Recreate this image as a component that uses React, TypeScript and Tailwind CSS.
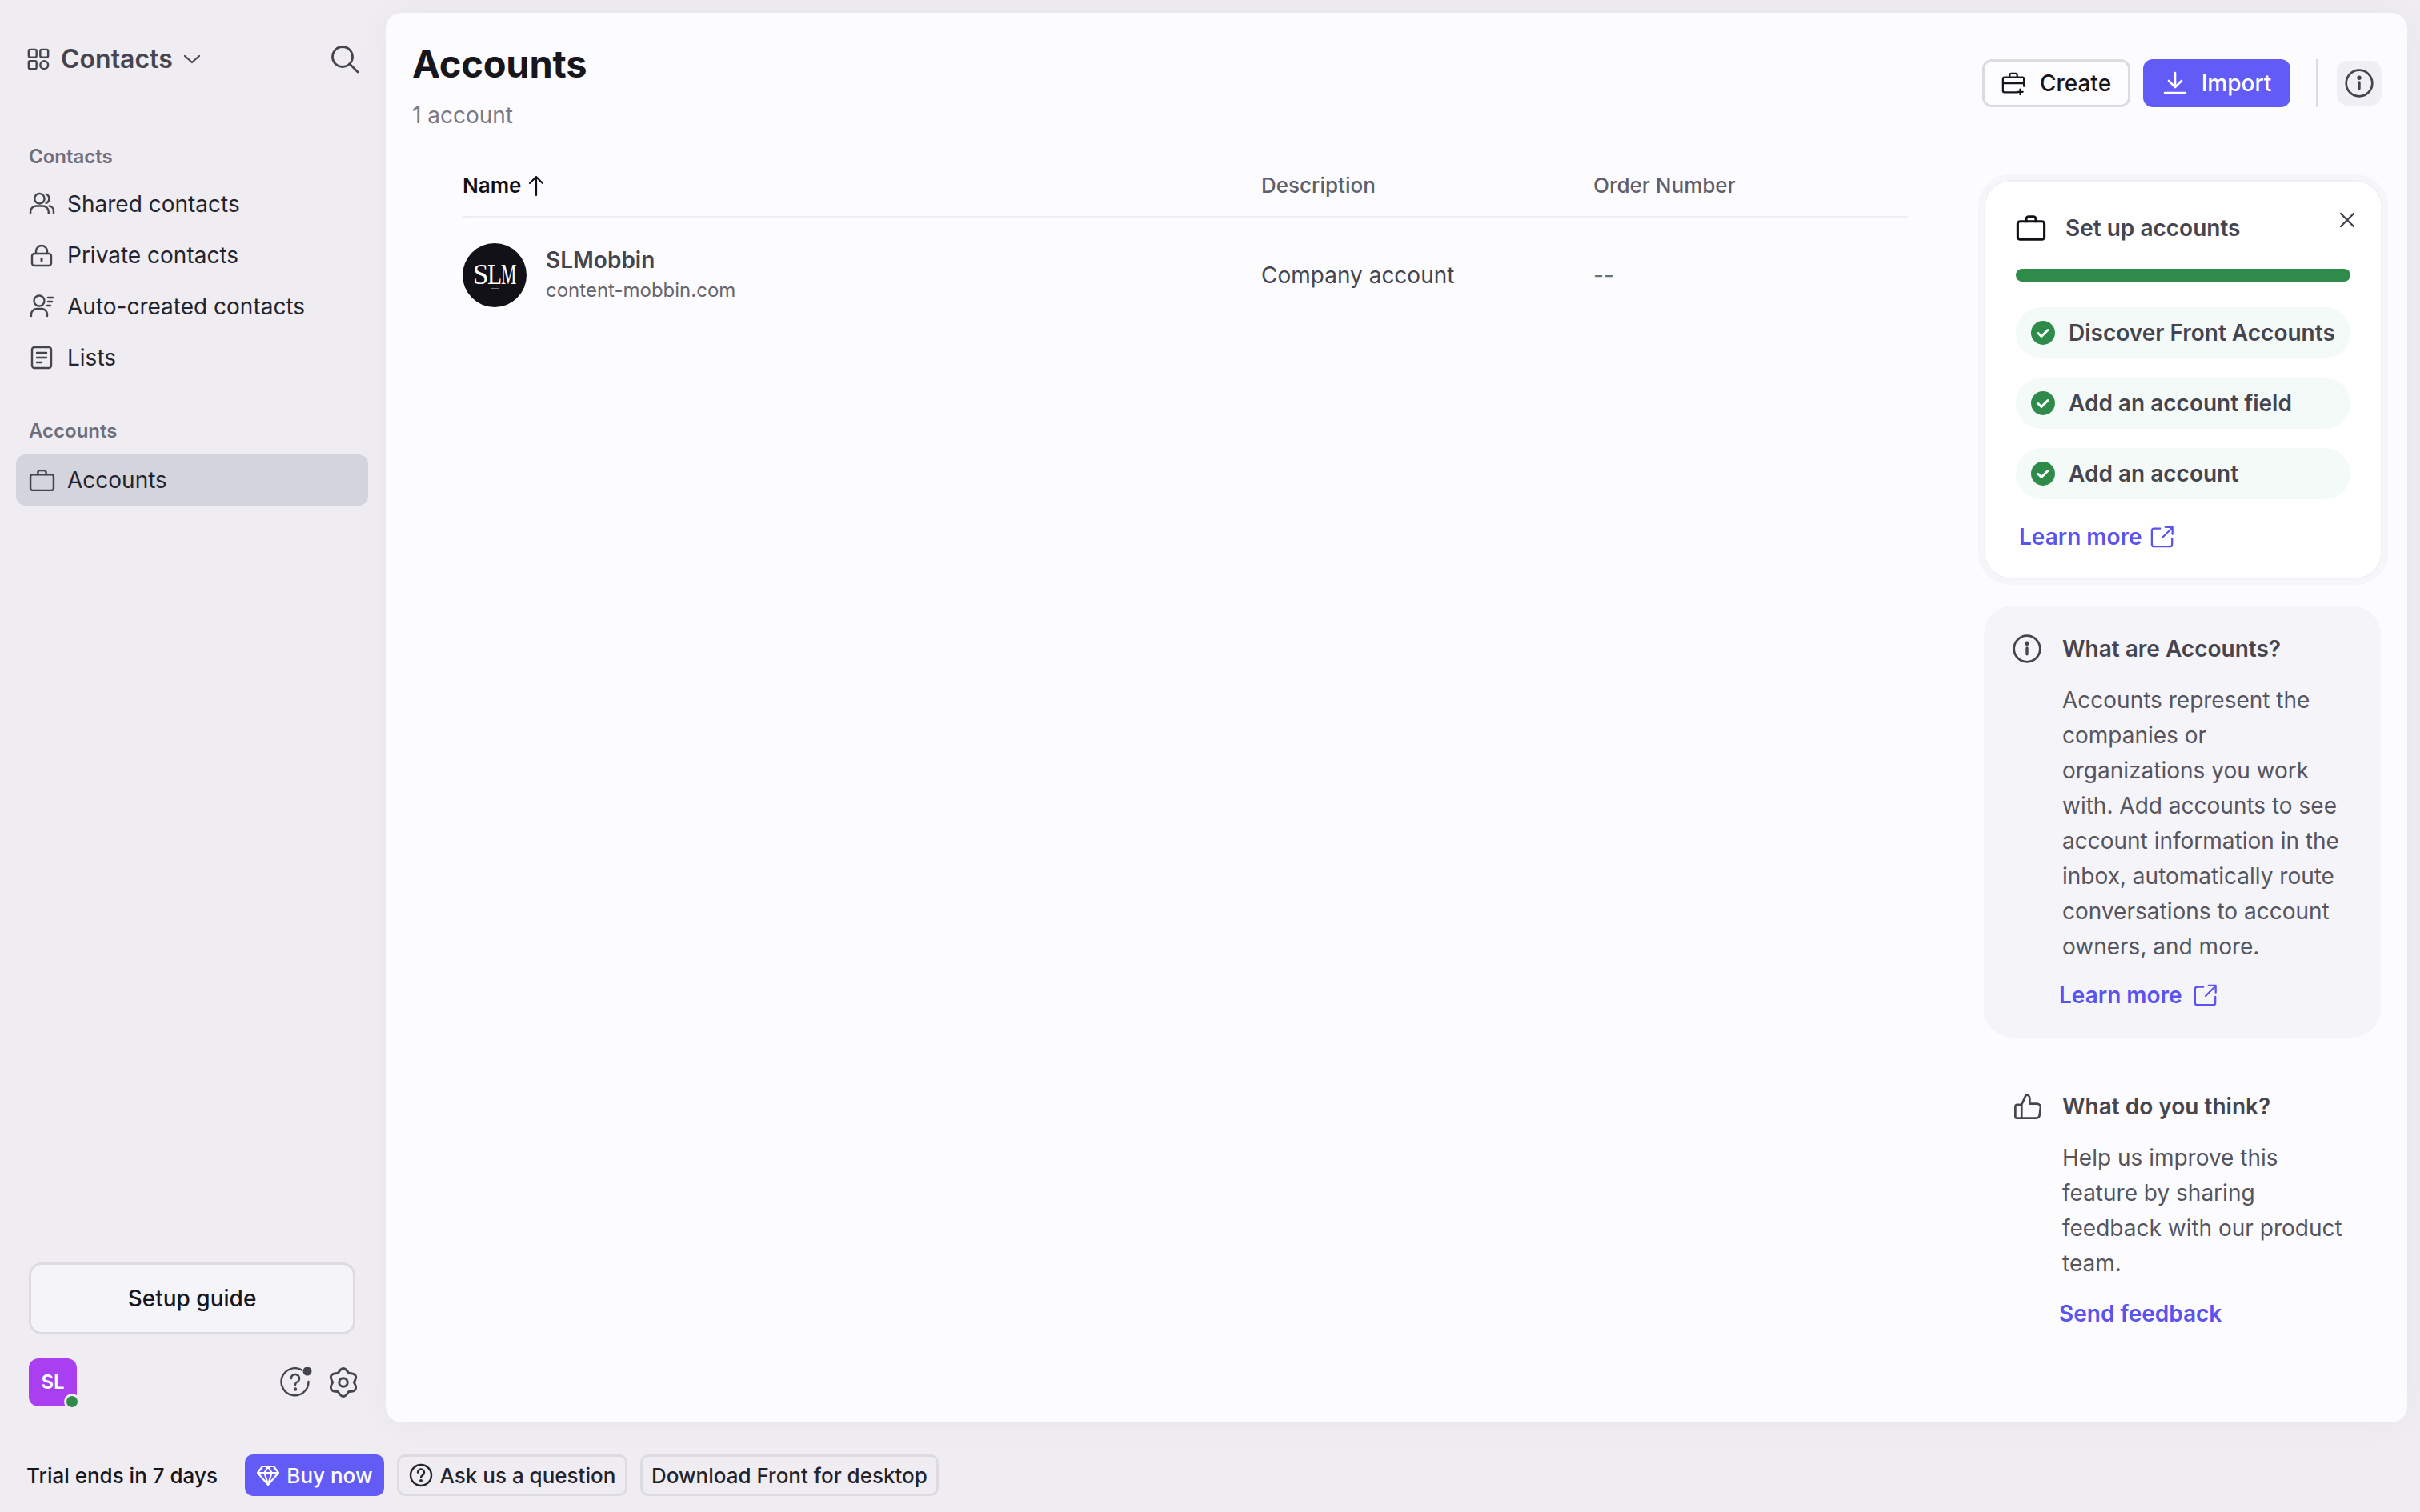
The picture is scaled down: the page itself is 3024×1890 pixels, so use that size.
import type { ReactNode } from "react";

const INK = "#46454f";

function Icon({ size = 32, children, className = "", color = INK, width = 2.4 }: { size?: number; children: ReactNode; className?: string; color?: string; width?: number }) {
  return (
    <svg width={size} height={size} viewBox="0 0 32 32" fill="none" stroke={color} strokeWidth={width} strokeLinecap="round" strokeLinejoin="round" className={`shrink-0 ${className}`}>
      {children}
    </svg>
  );
}

const Briefcase = (p: { size?: number; color?: string; width?: number }) => (
  <Icon {...p}>
    <rect x="2" y="9" width="28" height="19" rx="2.5" />
    <path d="M11 9V6.500A2.500 2.500 0 0 1 13.500 4h5A2.500 2.500 0 0 1 21 6.500V9" />
  </Icon>
);

const ExternalIcon = () => (
  <Icon size={30} color="#5b53f0" width={2.4}>
    <path d="M13 5H5a3 3 0 0 0-3 3v18a3 3 0 0 0 3 3h21a3 3 0 0 0 3-3v-8" />
    <path d="M16 17 29 4M20 3h9.500v9.500" />
  </Icon>
);

const InfoCircle = ({ size = 36 }: { size?: number }) => (
  <Icon size={size} width={2.4}>
    <circle cx="16" cy="16" r="14.500" />
    <path d="M16 15v7" strokeWidth={3} />
    <circle cx="16" cy="10" r="1.200" fill={INK} />
  </Icon>
);

function NavItem({ icon, label, active }: { icon: ReactNode; label: string; active?: boolean }) {
  return (
    <div className={`mx-[20px] w-[440px] h-[64px] rounded-[12px] pl-[17px] flex items-center ${active ? "bg-[#d4d4dd]" : ""}`}>
      <span className="w-[30px] h-[32px] flex items-center justify-center shrink-0">{icon}</span>
      <span className="ml-[17px] text-[28px] text-[#24232c]">{label}</span>
    </div>
  );
}

function Sidebar() {
  return (
    <aside className="w-[482px] shrink-0 flex flex-col h-full">
      <div className="h-[116px] pl-[34px] pr-[33px] flex items-center">
        <svg width="28" height="28" viewBox="0 0 30 30" fill="none" stroke={INK} strokeWidth="2.600" className="shrink-0">
          <rect x="2" y="2" width="10.500" height="10.500" rx="2" />
          <rect x="17.500" y="2" width="10.500" height="10.500" rx="2" />
          <rect x="2" y="17.500" width="10.500" height="10.500" rx="2" />
          <circle cx="22.750" cy="22.750" r="5.250" />
        </svg>
        <span className="ml-[14px] text-[32px] font-semibold text-[#46454f]">Contacts</span>
        <svg width="22" height="14" viewBox="0 0 22 14" fill="none" stroke={INK} strokeWidth="2.200" strokeLinecap="round" strokeLinejoin="round" className="ml-[13px]">
          <path d="M2 3l9 8 9-8" />
        </svg>
        <svg width="36" height="36" viewBox="0 0 36 36" fill="none" stroke={INK} strokeWidth="2.800" strokeLinecap="round" className="ml-auto">
          <circle cx="15" cy="15" r="12.500" />
          <path d="M24 24l10 10" />
        </svg>
      </div>
      <div className="mt-[48px] h-[32px] pl-[36px] flex items-center text-[24px] font-semibold text-[#6f6e7b]">Contacts</div>
      <div className="mt-[11px] flex flex-col">
        <NavItem
          label="Shared contacts"
          icon={
            <Icon size={33}>
              <circle cx="13" cy="9" r="6" />
              <path d="M2 27v-2a7 7 0 0 1 7-7h8a7 7 0 0 1 7 7v2M21 3.500a6 6 0 0 1 0 11M25 18a6 6 0 0 1 5 6v3" />
            </Icon>
          }
        />
        <NavItem
          label="Private contacts"
          icon={
            <Icon size={32}>
              <rect x="4" y="14" width="24" height="15" rx="3" />
              <path d="M9 14v-3a7 7 0 0 1 14 0v3" />
              <path d="M16 20.500v2.500" strokeWidth={3} />
            </Icon>
          }
        />
        <NavItem
          label="Auto-created contacts"
          icon={
            <Icon size={32}>
              <circle cx="13" cy="9" r="6.500" />
              <path d="M3 28v-2a7 7 0 0 1 7-7h6a7 7 0 0 1 7 7v2M24 5h6M24 10h5M23 15h4" />
            </Icon>
          }
        />
        <NavItem
          label="Lists"
          icon={
            <Icon size={32}>
              <rect x="4" y="3" width="24" height="26" rx="3" />
              <path d="M10 10h12M10 16h12M10 22h6" />
            </Icon>
          }
        />
      </div>
      <div className="mt-[44px] h-[32px] pl-[36px] flex items-center text-[24px] font-semibold text-[#6f6e7b]">Accounts</div>
      <div className="mt-[13px]">
        <NavItem active label="Accounts" icon={<Briefcase size={33} />} />
      </div>

      <div className="mt-auto mx-[36px] w-[408px] h-[90px] rounded-[16px] border-[3px] border-[#dcdbe2] bg-[#f5f4f8] flex items-center justify-center text-[28px] font-medium text-[#17161d]">
        Setup guide
      </div>
      <div className="mt-[30px] mb-[20px] pl-[36px] pr-[36px] h-[60px] flex items-center">
        <div className="relative w-[60px] h-[60px] rounded-[12px] bg-[#a93ff0] flex items-center justify-center text-[24px] font-semibold text-white">
          SL
          <span className="absolute right-[-4px] bottom-[-4px] w-[20px] h-[20px] rounded-full bg-[#2e8b4a] border-[3px] border-[#efedf2]" />
        </div>
        <svg width="40" height="38" viewBox="0 0 40 38" fill="none" stroke={INK} strokeWidth="2.400" strokeLinecap="round" className="ml-auto">
          <path d="M27 3.500A17 17 0 1 0 35.500 18" />
          <path d="M14 14a5 5 0 1 1 7.500 4.300c-2 1.200-2.500 2-2.500 4" />
          <circle cx="19" cy="27.500" r="1" fill={INK} />
          <circle cx="34" cy="5" r="5.500" fill={INK} stroke="none" />
        </svg>
        <svg width="38" height="38" viewBox="0 0 36 36" fill="none" stroke={INK} strokeWidth="2.800" strokeLinejoin="round" className="ml-[20px] -mr-[2px]">
          {[0, 60, 120, 180, 240, 300].map((deg) => (
            <path key={deg} d="M11.500 7.500Q18-4.500 24.500 7.500" transform={`rotate(${deg} 18 18)`} />
          ))}
          <circle cx="18" cy="18" r="5" />
        </svg>
      </div>
    </aside>
  );
}

function TableHeader({ label, className }: { label: string; className: string }) {
  return <div className={`text-[26px] font-medium text-[#5f5e6b] ${className}`}>{label}</div>;
}

function SlmLogo() {
  return (
    <div className="w-[80px] h-[80px] rounded-full bg-[#131118] flex flex-col items-center justify-center overflow-hidden shrink-0">
      <span className="flex items-baseline text-[35px] leading-[32px] text-white [font-family:'Liberation_Serif',serif]">
        <span className="inline-block w-[18px]">S</span>
        <span className="inline-block w-[17px] scale-x-[0.85] origin-left">L</span>
        <span className="inline-block w-[19px] scale-x-[0.62] origin-left">M</span>
      </span>
      <span className="w-[10px] h-[1px] bg-[#77767f]" />
    </div>
  );
}

function AccountsTable() {
  return (
    <div className="mt-[32px] ml-[63px] w-[1806px]">
      <div className="h-[76px] pb-[3px] flex items-center border-b-[2px] border-[#eeedf1]">
        <div className="w-[998px] flex items-center text-[26px] font-semibold text-[#111016]">
          Name
          <svg width="22" height="28" viewBox="0 0 22 28" fill="none" stroke="#111016" strokeWidth="2.200" strokeLinecap="round" strokeLinejoin="round" className="ml-[8px]">
            <path d="M11 26V3M3 11l8-8 8 8" />
          </svg>
        </div>
        <TableHeader label="Description" className="w-[415px]" />
        <TableHeader label="Order Number" className="" />
      </div>
      <div className="h-[144px] flex items-center">
        <div className="w-[998px] flex items-center">
          <SlmLogo />
          <div className="ml-[24px] flex flex-col">
            <span className="text-[28px] leading-[36px] font-semibold text-[#46454f]">SLMobbin</span>
            <span className="text-[24px] leading-[36px] mt-[2px] text-[#66656f]">content-mobbin.com</span>
          </div>
        </div>
        <div className="w-[415px] text-[28px] text-[#46454f]">Company account</div>
        <div className="text-[28px] text-[#6f6e7b]">--</div>
      </div>
    </div>
  );
}

function SetupRow({ label }: { label: string }) {
  return (
    <div className="h-[64px] rounded-full bg-[#f3faf7] pl-[19px] flex items-center">
      <svg width="30" height="30" viewBox="0 0 30 30" className="shrink-0">
        <circle cx="15" cy="15" r="15" fill="#2e8b4a" />
        <path d="M9 15.500l4 4 8-8" fill="none" stroke="#fff" strokeWidth="3" strokeLinecap="round" strokeLinejoin="round" />
      </svg>
      <span className="ml-[17px] text-[28px] font-semibold text-[#46454f]">{label}</span>
    </div>
  );
}

function SetupCard() {
  return (
    <div className="mt-[84px] w-[512px] rounded-[40px] border-[7px] border-[#f6f5f9] bg-white shadow-[inset_0_0_0_2px_#f1f0f5] pt-[42px] pb-[32px] px-[40px] relative">
      <div className="flex items-center h-[36px]">
        <Briefcase size={38} color="#111016" width={2.600} />
        <span className="ml-[24px] text-[28px] font-semibold text-[#46454f]">Set up accounts</span>
      </div>
      <svg width="20" height="20" viewBox="0 0 20 20" stroke={INK} strokeWidth="2.400" strokeLinecap="round" className="absolute right-[34px] top-[40px]">
        <path d="M2 2l16 16M18 2 2 18" />
      </svg>
      <div className="mt-[33px] h-[16px] rounded-full bg-[#2e8b4a]" />
      <div className="mt-[32px] flex flex-col gap-[24px]">
        <SetupRow label="Discover Front Accounts" />
        <SetupRow label="Add an account field" />
        <SetupRow label="Add an account" />
      </div>
      <div className="mt-[26px] ml-[4px] flex items-center text-[28px] font-semibold text-[#5b53f0]">
        Learn more
        <span className="ml-[10px] flex"><ExternalIcon /></span>
      </div>
    </div>
  );
}

function RightColumn() {
  return (
    <div className="w-[536px] shrink-0 pr-[24px] pt-[58px] flex flex-col">
      <div className="flex items-center pl-[5px]">
        <div className="w-[185px] h-[60px] rounded-[12px] border-[3px] border-[#dcdbe2] bg-[#fdfdff] flex items-center justify-center text-[28px] font-medium text-[#17161d]">
          <Icon size={30} color="#17161d">
            <path d="M30 20V10a2 2 0 0 0-2-2H4a2 2 0 0 0-2 2v16a2 2 0 0 0 2 2h18" />
            <path d="M11 8V5a2 2 0 0 1 2-2h6a2 2 0 0 1 2 2v3M2 16h28M14 16h.01M25 24v7M21.500 27.500h7" />
          </Icon>
          <span className="ml-[18px]">Create</span>
        </div>
        <div className="ml-[16px] w-[184px] h-[60px] rounded-[12px] bg-[#625bf6] flex items-center justify-center text-[28px] font-medium text-white">
          <Icon size={32} color="#fff" width={2.600}>
            <path d="M16 3v17M8 13l8 8 8-8M3 28h26" />
          </Icon>
          <span className="ml-[17px]">Import</span>
        </div>
        <div className="ml-[32px] w-[2px] h-[60px] bg-[#dcdbe2]" />
        <div className="ml-[24px] w-[56px] h-[56px] rounded-[14px] bg-[#f0eff3] flex items-center justify-center">
          <InfoCircle />
        </div>
      </div>

      <SetupCard />

      <div className="mt-[26px] ml-[7px] w-[496px] rounded-[36px] bg-[#f5f4f8] pt-[36px] pb-[32px] pl-[36px]">
        <div className="flex items-center h-[36px]">
          <InfoCircle />
          <span className="ml-[26px] text-[28px] font-semibold text-[#46454f]">What are Accounts?</span>
        </div>
        <p className="mt-[24px] ml-[62px] w-[356px] text-[28px] leading-[44px] text-[#55545f]">
          Accounts represent the companies or organizations you work with. Add accounts to see account information in the inbox, automatically route conversations to account owners, and more.
        </p>
        <div className="mt-[18px] ml-[58px] flex items-center text-[28px] font-semibold text-[#5b53f0]">
          Learn more
          <span className="ml-[14px] flex"><ExternalIcon /></span>
        </div>
      </div>

      <div className="mt-[68px] ml-[7px] w-[496px] pl-[36px]">
        <div className="flex items-center h-[36px]">
          <Icon size={36}>
            <path d="M10 14H5a2 2 0 0 0-2 2v11a2 2 0 0 0 2 2h21a4 4 0 0 0 4-3.500l1-8a4 4 0 0 0-4-4.500h-8V7a4 4 0 0 0-4-4l-5 11v15" />
          </Icon>
          <span className="ml-[26px] text-[28px] font-semibold text-[#46454f]">What do you think?</span>
        </div>
        <p className="mt-[24px] ml-[62px] w-[356px] text-[28px] leading-[44px] text-[#55545f]">
          Help us improve this feature by sharing feedback with our product team.
        </p>
        <div className="mt-[20px] ml-[58px] text-[28px] font-semibold text-[#5b53f0]">Send feedback</div>
      </div>
    </div>
  );
}

function BottomBar() {
  return (
    <div className="flex-1 pt-[40px] pl-[33px] flex items-start text-[26px]">
      <span className="h-[52px] flex items-center font-medium text-[#17161d]">Trial ends in 7 days</span>
      <div className="ml-[34px] w-[174px] h-[52px] rounded-[10px] bg-[#625bf6] flex items-center justify-center text-white font-medium">
        <svg width="30" height="30" viewBox="0 0 30 30" fill="none" stroke="#fff" strokeWidth="2.200" strokeLinejoin="round" strokeLinecap="round">
          <path d="M8 4h14l6 8-13 15L2 12zM2 12h26M10.500 12 15 27l4.500-15M10.500 12 15 4l4.500 8" />
        </svg>
        <span className="ml-[8px]">Buy now</span>
      </div>
      <div className="ml-[16px] w-[288px] h-[52px] rounded-[10px] border-[3px] border-[#dcdbe2] flex items-center justify-center text-[#24232c] font-medium">
        <svg width="30" height="30" viewBox="0 0 30 30" fill="none" stroke="#24232c" strokeWidth="2.400" strokeLinecap="round">
          <circle cx="15" cy="15" r="13" />
          <path d="M11 11.500a4 4 0 1 1 6 3.500c-1.500 1-2 1.500-2 3" />
          <circle cx="15" cy="22" r=".8" fill="#24232c" />
        </svg>
        <span className="ml-[9px]">Ask us a question</span>
      </div>
      <div className="ml-[16px] w-[373px] h-[52px] rounded-[10px] border-[3px] border-[#dcdbe2] flex items-center justify-center text-[#24232c] font-medium">
        Download Front for desktop
      </div>
    </div>
  );
}

export default function App() {
  return (
    <div className="w-[3024px] h-[1890px] flex flex-col overflow-hidden bg-[#efedf2] font-['Inter',sans-serif]">
      <div className="h-[1778px] pt-[16px] pr-[16px] flex shrink-0">
        <Sidebar />
        <main className="flex-1 flex rounded-[20px] bg-[#fcfcfe] shadow-[0_0_48px_rgba(40,40,70,0.035)]">
          <div className="flex-1 pl-[33px] pt-[32px]">
            <h1 className="text-[47px] leading-[64px] font-bold tracking-[-0.2px] text-[#17161d]">Accounts</h1>
            <div className="mt-[12px] h-[40px] flex items-center text-[28px] text-[#7a7985]">1 account</div>
            <AccountsTable />
          </div>
          <RightColumn />
        </main>
      </div>
      <BottomBar />
    </div>
  );
}
